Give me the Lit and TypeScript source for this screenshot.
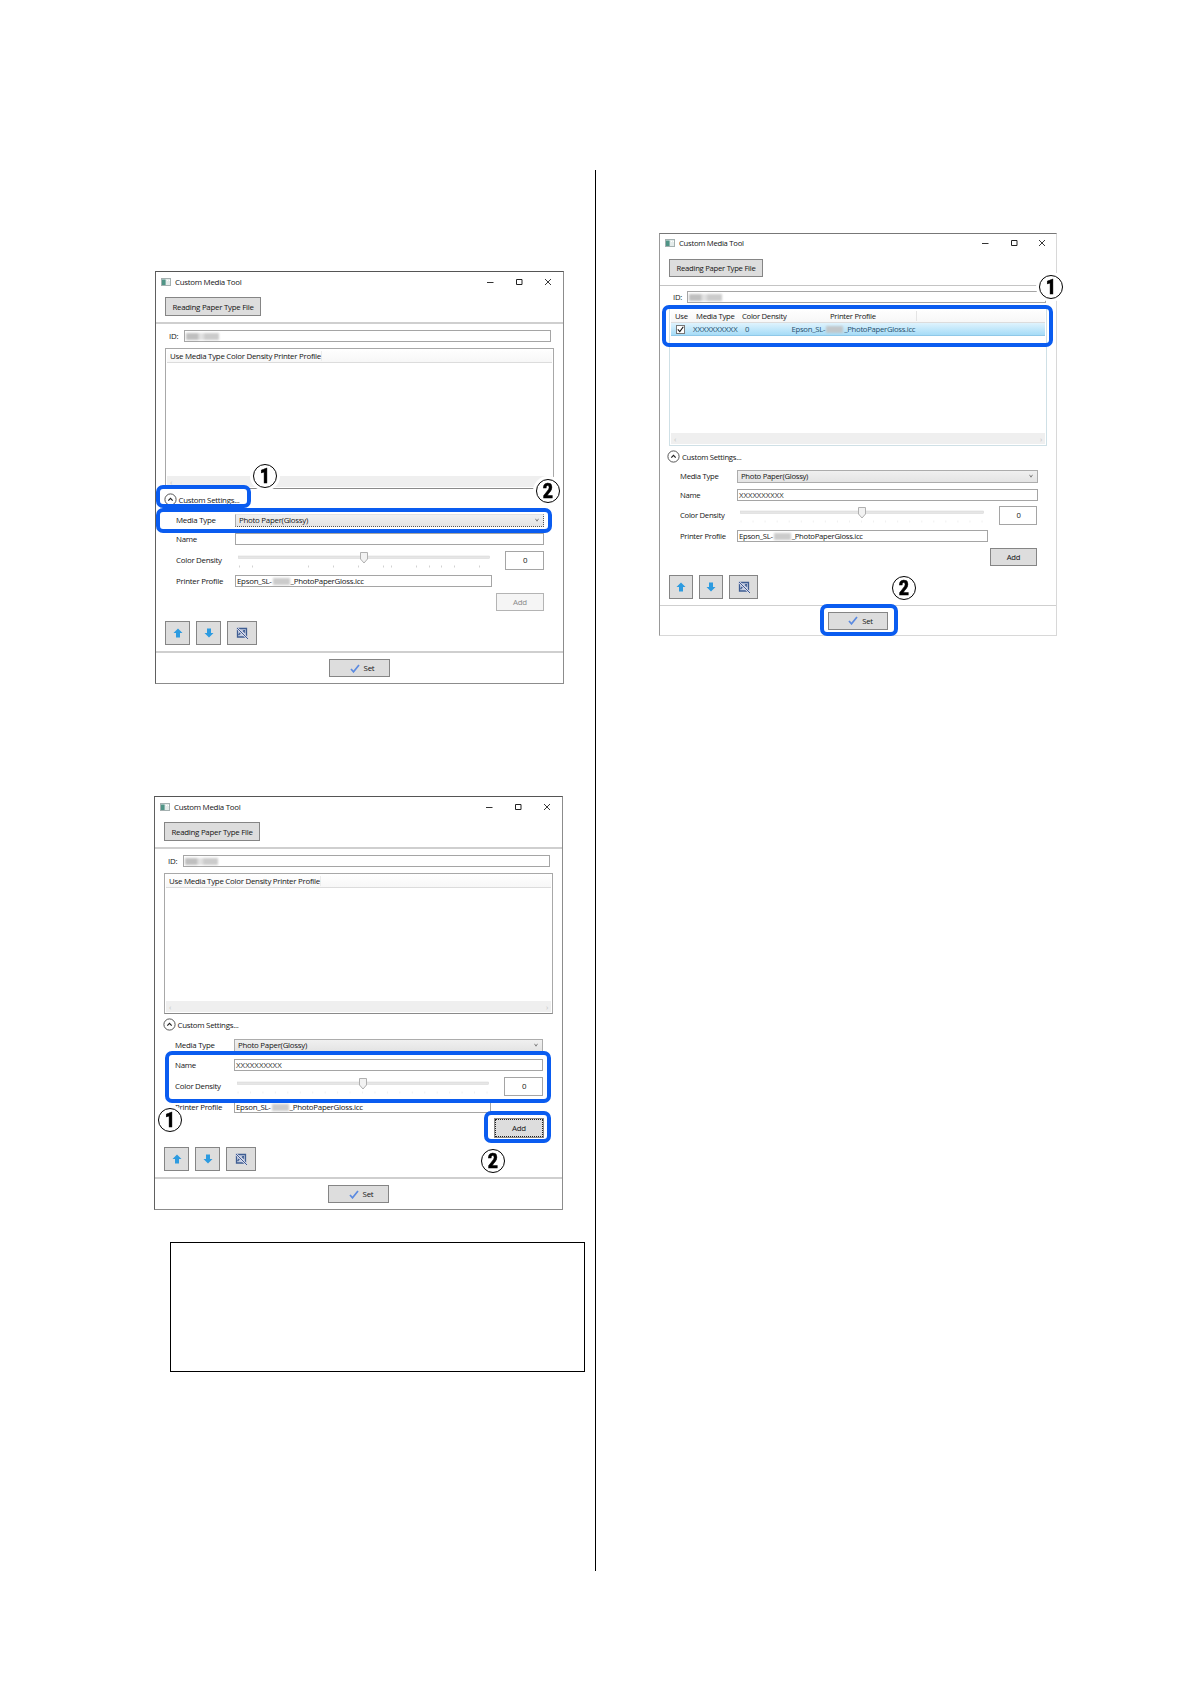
import { LitElement, html, css, svg, nothing } from "lit";
import { customElement, property } from "lit/decorators.js";
import { classMap } from "lit/directives/class-map.js";

@customElement("step-badge")
class StepBadge extends LitElement {
  @property() n = "1";
  static styles = css`
    :host {
      display: block;
      width: 30px;
      height: 30px;
      border-radius: 50%;
      background: #fff;
      padding: 3px;
      box-sizing: border-box;
    }
    .ring {
      box-sizing: border-box;
      width: 24px;
      height: 24px;
      border: 1.3px solid #000;
      border-radius: 50%;
      display: flex;
      align-items: center;
      justify-content: center;
      font: 900 20.5px/22px Roboto, sans-serif;
      color: #000;
    }
    .digit {
      transform: scaleX(0.86);
      -webkit-text-stroke: 0.5px #000;
    }
  `;
  render() {
    return html`<div class="ring"><span class="digit">${this.n}</span></div>`;
  }
}

@customElement("media-window")
class MediaWindow extends LitElement {
  @property({ type: Boolean }) compact = false;
  @property({ type: Boolean }) filled = false;
  @property({ type: Boolean }) focusCombo = false;
  @property() add: "off" | "focus" | "on" = "on";
  @property({ type: Boolean }) ticks = false;

  static styles = css`
    :host {
      display: block;
    }
    * {
      box-sizing: border-box;
    }
    .win {
      --fs: 7.9px;
      --ls: -0.27px;
      --field: 309px;
      --label: 59px;
      width: 409px;
      height: 413px;
      border: 1px solid #8c8c8c;
      border-top-color: #555;
      border-left-color: #606060;
      background: #fff;
      display: flex;
      flex-direction: column;
      font-family: "Open Sans", "Noto Sans", sans-serif;
      font-size: var(--fs);
      letter-spacing: var(--ls);
      line-height: 10px;
      color: #151515;
      white-space: nowrap;
    }
    .title {
      display: flex;
      align-items: center;
      height: 20px;
      padding: 0 11px 1px 5px;
      flex: none;
    }
    .title .name {
      margin-left: 4px;
      flex: 1;
    }
    .ctl {
      width: 8px;
      height: 8px;
      margin-left: 21px;
      display: block;
    }
    .btn {
      background: #dddddd;
      border: 1px solid #858585;
      display: flex;
      align-items: center;
      justify-content: center;
    }
    .bar {
      height: 32px;
      padding: 5px 0 0 9px;
      border-bottom: 2px solid #cfcfcf;
      flex: none;
    }
    .read {
      width: 96px;
      height: 19px;
    }
    .id {
      display: flex;
      align-items: center;
      height: 12px;
      margin: 6px 0 0 13px;
      flex: none;
    }
    .id .box {
      margin-left: 6px;
      width: 367px;
      height: 12px;
    }
    .id .lab {
      width: 9px;
    }
    .box {
      border: 1px solid #a5a5a5;
      background: #fff;
      display: flex;
      align-items: center;
      padding-left: 1px;
    }
    .xs {
      letter-spacing: 0.02px;
      color: #333;
    }
    .smear {
      display: inline-block;
      width: 33px;
      height: 7px;
      background: linear-gradient(90deg, #b4b4b4 0 35%, #dcdcdc 40% 52%, #c2c2c2 58% 100%);
      filter: blur(1.2px);
      opacity: 0.85;
    }
    .smear.small {
      width: 17px;
      height: 7px;
      margin: 0 1px;
      background: #c2c2c2;
      vertical-align: middle;
    }
    .list {
      margin: 6px 0 0 9px;
      width: 389px;
      height: 141px;
      border: 1px solid #a8a8a8;
      border-bottom-color: #8a8a8a;
      display: flex;
      flex-direction: column;
      flex: none;
    }
    .head {
      height: 14px;
      margin: 0 1px;
      padding-left: 3px;
      display: flex;
      align-items: center;
      border-bottom: 1px solid #dcdcdc;
      background: linear-gradient(#fff, #f7f7f7);
    }
    .head .one {
      border-right: 1px solid #ececec;
    }
    .cols {
      display: grid;
      grid-template-columns: 21px 46px 88px 86px 1px;
    }
    .cols .last {
      border-right: 1px solid #e4e4e4;
    }
    .row {
      height: 13px;
      margin: 0 1px;
      padding-left: 5px;
      display: grid;
      grid-template-columns: 17px 52px 46.5px 1fr;
      align-items: center;
      background: linear-gradient(#dff3fd, #a6dcf7);
      border-bottom: 1px solid #8fc8e8;
      color: #27506e;
    }
    .row .xs {
      color: #27506e;
    }
    .check {
      width: 9px;
      height: 9px;
      border: 1px solid #777;
      background: #fff;
      display: block;
    }
    .scroll {
      margin: auto 1px 1px;
      height: 11px;
      background: #efefef;
      display: flex;
      justify-content: space-between;
      align-items: center;
      padding: 0 3px;
      color: #c4c4c4;
    }
    .expand {
      display: flex;
      align-items: center;
      height: 21px;
      padding-left: 7.5px;
      flex: none;
    }
    .expand svg {
      width: 13px;
      height: 13px;
      margin-right: 2px;
    }
    .f {
      display: flex;
      align-items: center;
      padding-left: 20px;
      flex: none;
    }
    .f .lab {
      width: var(--label);
    }
    .media { height: 20px; }
    .nm { height: 19px; padding-bottom: 2px; }
    .filled .nm { padding-bottom: 0; }
    .den { height: 22px; }
    .filled .den { margin-top: 1px; }
    .prof { height: 20px; }
    .addrow { height: 22px; justify-content: flex-end; padding-right: 19px; }
    .combo {
      width: var(--field);
      height: 13px;
      background: linear-gradient(#f0f0f0, #e4e4e4);
      border: 1px solid #acacac;
      padding: 0 4px 0 3px;
      display: flex;
      align-items: center;
      justify-content: space-between;
    }
    .combo.focus {
      border-top-color: #e2e2e2;
      border-bottom: 1px dotted #555;
      border-right: 1px dotted #555;
    }
    .combo svg {
      width: 4px;
      height: 4px;
    }
    .nm .box { width: var(--field); height: 12px; }
    .prof .box { width: 257px; height: 12px; }
    .track {
      margin-left: 3px;
      width: 252px;
      height: 20px;
      display: block;
    }
    .val {
      margin-left: 15px;
      width: 39px;
      height: 19px;
      justify-content: center;
    }
    .add {
      width: 48px;
      height: 18px;
    }
    .add.off {
      background: #f5f5f5;
      border-color: #b4b4b4;
      color: #8a8a8a;
    }
    .add.focus {
      border: 1px dotted #222;
      outline: 1px solid #8a8a8a;
      outline-offset: 0;
    }
    .tools {
      height: 40px;
      padding: 8px 0 0 9px;
      display: flex;
      border-bottom: 2px solid #cfcfcf;
      flex: none;
    }
    .tool {
      width: 25px;
      height: 24px;
      margin-right: 6px;
    }
    .tool.wide { width: 30px; }
    .tool svg { width: 12px; height: 12px; }
    .foot {
      flex: 1;
      display: flex;
      justify-content: center;
      align-items: center;
    }
    .set {
      width: 61px;
      height: 18px;
      padding-left: 5px;
    }
    .set svg { width: 10px; height: 9px; margin-right: 4px; }

    .filled { height: 414px; }
    .compact {
      --fs: 7.7px;
      --field: 301px;
      --label: 57px;
      width: 398px;
      height: 403px;
      border-color: #d8d8d8;
      border-top-color: #777;
      border-left-color: #999;
    }
    .compact .read { width: 94px; height: 18px; }
    .compact .bar { border-bottom-width: 1.5px; border-color: #c4c4c4; }
    .compact .id { margin-top: 5px; }
    .compact .id .box { width: 359px; margin-left: 5px; }
    .compact .list { margin-top: 5px; width: 378px; height: 138px; border-color: #cfe0e6; }
    .compact .expand { height: 21px; padding-left: 7px; }
    .compact .media { height: 18px; }
    .compact .prof { height: 21px; }
    .compact .nm { height: 20px; }
    .compact .den { height: 20px; margin-top: 0; }
    .compact .prof .box { width: 251px; }
    .compact .track { width: 244px; }
    .compact .val { width: 38px; }
    .compact .addrow { height: 21px; }
    .compact .add { width: 47px; }
    .compact .tool { width: 24px; }
    .compact .tool.wide { width: 29px; }
    .compact .tools { height: 39px; border-bottom-width: 1px; }
    .compact .head { padding-left: 4px; }
    .compact .title { padding: 0 10px 2px 5px; }
    .compact .ctl { margin-left: 20.5px; }
    .compact .set { width: 60px; }
  `;

  private profile() {
    return html`<span>Epson_SL-<i class="smear small"></i>_PhotoPaperGloss.icc</span>`;
  }

  private slider() {
    const w = this.compact ? 244 : 252;
    const mid = w / 2;
    const marks = [1, 14, 70, 95, 120, 145, 153, 178, 191, 203, 216, 241];
    return html`<svg class="track" viewBox="0 0 ${w} 20">
      <rect x="0.5" y="6" width=${w - 1} height="2.4" fill="#e6e6e6" stroke="#d2d2d2" stroke-width=".5" />
      ${this.ticks
        ? marks.map((x) => svg`<path d="M${x + 0.5} 15.500v2" stroke="#d2d2d2"/>`)
        : Array.from({ length: 21 }, (_, i) => svg`<path d="M${1 + (i * (w - 3)) / 20} 15.500v2" stroke="#f0f0f0"/>`)}
      <path d="M${mid - 3.5} 2.500h7v6.500l-3.500 4l-3.500 -4z" fill="#f2f2f2" stroke="#b0b0b0" />
    </svg>`;
  }

  render() {
    return html`<div class=${classMap({ win: true, filled: this.filled, compact: this.compact })}>
      <div class="title">
        <svg width="10" height="8" viewBox="0 0 10 8">
          <rect x=".5" y=".5" width="9" height="7" fill="#e4ebea" stroke="#a4b0b0" />
          <rect x="1" y="1.500" width="3.600" height="5.500" fill="#4f9486" />
          <path d="M6 2.500h1M8 2.500h1" stroke="#fff" />
        </svg>
        <span class="name">Custom Media Tool</span>
        <svg class="ctl" viewBox="0 0 8 8"><path d="M1 4.500h6.500" stroke="#333" /></svg>
        <svg class="ctl" viewBox="0 0 8 8"><path d="M1.500 1.500h5.500v5h-5.500z" fill="none" stroke="#222" /></svg>
        <svg class="ctl" viewBox="0 0 8 8"><path d="M1 1l6 6M7 1l-6 6" stroke="#222" stroke-width=".9" /></svg>
      </div>
      <div class="bar"><div class="btn read">Reading Paper Type File</div></div>
      <div class="id"><span class="lab">ID:</span><div class="box"><i class="smear"></i></div></div>
      <div class="list">
        ${this.compact
          ? html`<div class="head cols">
                <span>Use</span><span>Media Type</span><span>Color Density</span><span>Printer Profile</span>
                <span class="last">&nbsp;</span>
              </div>
              <div class="row">
                <svg class="check" viewBox="0 0 7 7"><path d="M.8 3.400l2 2.200L6.300.8" fill="none" stroke="#111" stroke-width="1.100" /></svg>
                <span class="xs">XXXXXXXXXX</span><span>0</span>${this.profile()}
              </div>`
          : html`<div class="head"><span class="one">Use Media Type Color Density Printer Profile</span></div>`}
        <div class="scroll"><span>‹</span><span>›</span></div>
      </div>
      <div class="expand">
        <svg viewBox="0 0 13 13">
          <circle cx="6.500" cy="6.500" r="5.600" fill="#fff" stroke="#444" stroke-width=".9" />
          <path d="M4.300 7.600l2.200-2.200 2.200 2.200" fill="none" stroke="#222" stroke-width="1.200" />
        </svg>
        <span>Custom Settings...</span>
      </div>
      <div class="f media">
        <span class="lab">Media Type</span>
        <div class=${classMap({ combo: true, focus: this.focusCombo })}>
          <span>Photo Paper(Glossy)</span>
          <svg viewBox="0 0 4 4"><path d="M.5 .8L2 3.200 3.500.8" fill="none" stroke="#666" stroke-width=".8" /></svg>
        </div>
      </div>
      <div class="f nm">
        <span class="lab">Name</span>
        <div class="box">${this.filled ? html`<span class="xs">XXXXXXXXXX</span>` : nothing}</div>
      </div>
      <div class="f den"><span class="lab">Color Density</span>${this.slider()}<div class="box val">0</div></div>
      <div class="f prof"><span class="lab">Printer Profile</span><div class="box">${this.profile()}</div></div>
      <div class="f addrow"><div class="btn add ${this.add}">Add</div></div>
      <div class="tools">
        <div class="btn tool"><svg viewBox="0 0 12 12"><path d="M6 1.500l4.500 4.500H8v4.500H4V6H1.500z" fill="#2d9be0" /></svg></div>
        <div class="btn tool"><svg viewBox="0 0 12 12"><path d="M6 10.500L1.500 6H4V1.500h4V6h2.500z" fill="#2d9be0" /></svg></div>
        <div class="btn tool wide">
          <svg viewBox="0 0 12 12">
            <path d="M1.500 1.500h9v8.500h-9z" fill="#c3cde0" stroke="#3f5d92" stroke-width="1.300" />
            <path d="M2.500 8l2.500-3 1.500 2M7 3.500l2 2M8.500 3v1" fill="none" stroke="#3f5d92" stroke-width="1.200" />
            <path d="M1 1l11 11" stroke="#dde" stroke-width="2.200" /><path d="M1 1l11 11" stroke="#3f5d92" stroke-width="1" />
          </svg>
        </div>
      </div>
      <div class="foot">
        <div class="btn set">
          <svg viewBox="0 0 10 9"><path d="M1 5l2.500 2.800L9 1" fill="none" stroke="#5b8ae0" stroke-width="1.700" /></svg>Set
        </div>
      </div>
    </div>`;
  }
}

@customElement("app-root")
class AppRoot extends LitElement {
  static styles = css`
    :host {
      display: block;
      height: 1684px;
      background: #fff;
    }
    .page {
      display: flex;
      box-sizing: border-box;
      height: 1684px;
      padding-top: 170px;
    }
    .left {
      box-sizing: border-box;
      width: 596px;
      height: 1401px;
      border-right: 1px solid #000;
      display: flow-root;
    }
    .right {
      display: flow-root;
    }
    .shot {
      position: relative;
    }
    .a { margin: 101px 0 0 155px; }
    .b { margin: 112px 0 0 154px; }
    .c { margin: 63px 0 0 63px; }
    .note {
      box-sizing: border-box;
      width: 415px;
      height: 130px;
      margin: 32px 0 0 170px;
      border: 1px solid #000;
    }
    .hl {
      position: absolute;
      box-sizing: border-box;
      border: 4px solid #0a5cf0;
      border-radius: 7px;
    }
    step-badge {
      position: absolute;
    }
    .a1 { left: 1px; top: 214px; width: 95px; height: 23px; }
    .a2 { left: 1px; top: 237px; width: 396px; height: 25px; }
    .ab1 { left: 95px; top: 190px; }
    .ab2 { left: 378px; top: 205px; }
    .b1 { left: 11px; top: 255px; width: 386px; height: 52px; }
    .b2 { left: 330px; top: 315px; width: 67px; height: 32px; }
    .bb1 { left: 1px; top: 309px; }
    .bb2 { left: 324px; top: 350px; }
    .c1 { left: 3px; top: 72px; width: 391px; height: 42px; }
    .c2 { left: 161px; top: 371px; width: 78px; height: 32px; }
    .cb1 { left: 377px; top: 39px; }
    .cb2 { left: 230px; top: 340px; }
  `;
  render() {
    return html`<div class="page">
      <div class="left">
        <div class="shot a">
          <media-window focusCombo ticks add="off"></media-window>
          <div class="hl a1"></div>
          <div class="hl a2"></div>
          <step-badge class="ab1" n="1"></step-badge>
          <step-badge class="ab2" n="2"></step-badge>
        </div>
        <div class="shot b">
          <media-window filled add="focus"></media-window>
          <div class="hl b1"></div>
          <div class="hl b2"></div>
          <step-badge class="bb1" n="1"></step-badge>
          <step-badge class="bb2" n="2"></step-badge>
        </div>
        <div class="note"></div>
      </div>
      <div class="right">
        <div class="shot c">
          <media-window compact filled add="on"></media-window>
          <div class="hl c1"></div>
          <div class="hl c2"></div>
          <step-badge class="cb1" n="1"></step-badge>
          <step-badge class="cb2" n="2"></step-badge>
        </div>
      </div>
    </div>`;
  }
}
